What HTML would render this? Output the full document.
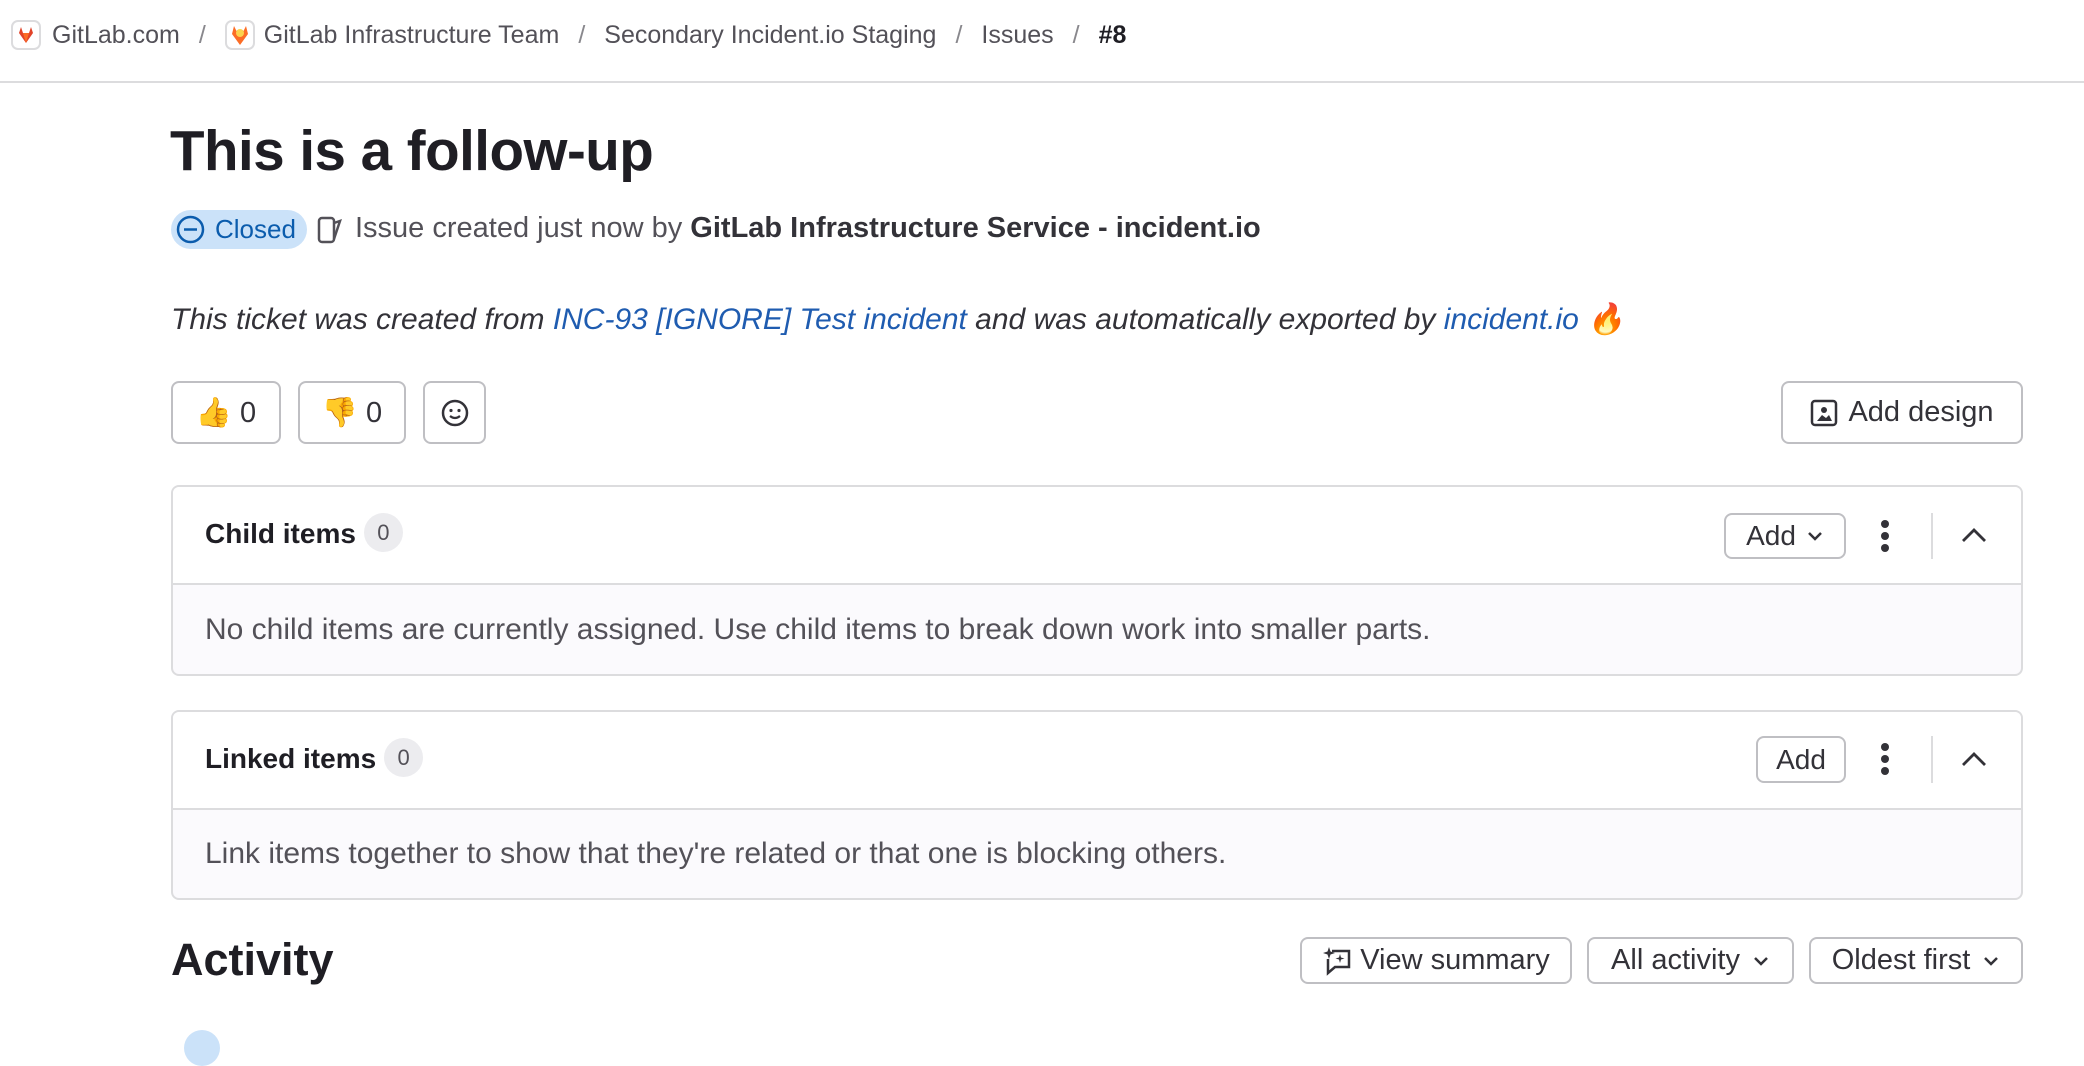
<!DOCTYPE html>
<html><head><meta charset="utf-8"><style>
*{box-sizing:border-box;margin:0;padding:0}
body{width:2084px;height:1036px;overflow:hidden;background:#fff;font-family:"Liberation Sans",sans-serif;color:#333238;position:relative}
.a{position:absolute;white-space:nowrap}
.bcrow{position:absolute;left:11px;top:20px;height:30px;display:flex;align-items:center;font-size:25px;color:#535158;white-space:nowrap}
.sl{color:#89888d;margin:0 19px}
.btn{position:absolute;border:2px solid #bfbfc3;border-radius:8px;background:#fff;display:flex;align-items:center;justify-content:center;font-size:29px;color:#333238;white-space:nowrap}
.card{position:absolute;left:171px;width:1852px;border:2px solid #dcdcde;border-radius:8px;background:#fbfafd;overflow:hidden}
.card .hd{height:98px;background:#fff;border-bottom:2px solid #dcdcde;position:relative}
.card .tt{position:absolute;left:32px;top:29px;font-size:28px;font-weight:bold;color:#1f1e24;white-space:nowrap}
.cnt{display:inline-block;width:39px;height:39px;border-radius:20px;background:#ececef;color:#535158;font-size:22px;font-weight:normal;text-align:center;line-height:39px;margin-left:8px;vertical-align:middle;position:relative;top:-3px}
.card .bd{position:absolute;left:32px;font-size:30px;color:#535158;white-space:nowrap}
</style></head><body>
<div class="bcrow">
<svg width="30" height="30" viewBox="0 0 30 30"><rect x="1" y="1" width="28" height="28" rx="6" fill="#fff" stroke="#dcdcde" stroke-width="2"/><path d="M15 23 L8 13 L10 7 L12 13 H18 L20 7 L22 13 Z" fill="#e24329"/><path d="M15 23 L12 13 H18 Z" fill="#fc6d26"/></svg>
<span style="margin-left:11px">GitLab.com</span><span class="sl">/</span>
<svg width="30" height="30" viewBox="0 0 30 30"><rect x="1" y="1" width="28" height="28" rx="6" fill="#fff" stroke="#dcdcde" stroke-width="2"/><path d="M15 25 L7 14 L9 6 L12 12 H18 L21 6 L23 14 Z" fill="#fc6d26"/><circle cx="15" cy="13" r="4" fill="#fcd34d"/></svg>
<span style="margin-left:9px">GitLab Infrastructure Team</span><span class="sl">/</span>
<span>Secondary Incident.io Staging</span><span class="sl">/</span>
<span>Issues</span><span class="sl">/</span>
<span style="font-weight:bold;color:#1f1e24">#8</span>
</div>
<div class="a" style="left:0;top:81px;width:2084px;height:2px;background:#dcdcde"></div>

<div class="a" style="left:170px;top:118px;font-size:56.5px;font-weight:bold;color:#1f1e24;letter-spacing:-0.5px">This is a follow-up</div>
<div class="a" style="left:171px;top:210px;width:136px;height:39px;border-radius:20px;background:#cbe2f9;"></div>
<svg class="a" style="left:175px;top:214px" width="31" height="31" viewBox="0 0 31 31"><circle cx="15.5" cy="15.5" r="12.5" fill="none" stroke="#0b5cad" stroke-width="2.5"/><path d="M9 15.5H22" stroke="#0b5cad" stroke-width="2.5"/></svg>
<div class="a" style="left:215px;top:214px;font-size:26px;color:#0b5cad">Closed</div>
<svg class="a" style="left:316px;top:215px" width="28" height="30" viewBox="0 0 28 30"><rect x="3" y="3" width="15" height="24" rx="3" fill="none" stroke="#535158" stroke-width="2.5"/><path d="M18 8 L24 6 L18 24" fill="none" stroke="#535158" stroke-width="2.5"/></svg>
<div class="a" style="left:355px;top:212px;font-size:29px;color:#535158">Issue created just now by <b style="color:#333238">GitLab Infrastructure Service - incident.io</b></div>

<div class="a" style="left:171px;top:302px;font-size:30px;font-style:italic;color:#333238">This ticket was created from <span style="color:#1f5cb0">INC-93 [IGNORE] Test incident</span> and was automatically exported by <span style="color:#1f5cb0">incident.io</span> 🔥</div>

<div class="btn" style="left:171px;top:381px;width:110px;height:63px">👍&nbsp;0</div>
<div class="btn" style="left:298px;top:381px;width:108px;height:63px">👎&nbsp;0</div>
<div class="btn" style="left:423px;top:381px;width:63px;height:63px"><svg width="30" height="30" viewBox="0 0 30 30"><circle cx="15" cy="15" r="12" fill="none" stroke="#333238" stroke-width="2.5"/><circle cx="11" cy="12.5" r="1.6" fill="#333238"/><circle cx="19" cy="12.5" r="1.6" fill="#333238"/><path d="M10 18 Q15 22 20 18" fill="none" stroke="#333238" stroke-width="2.2"/></svg></div>
<div class="btn" style="left:1781px;top:381px;width:242px;height:63px"><svg width="28" height="28" viewBox="0 0 28 28" style="margin-right:10px"><rect x="2" y="2" width="24" height="24" rx="3" fill="none" stroke="#333238" stroke-width="2.5"/><circle cx="14" cy="11" r="3" fill="#333238"/><path d="M7 22 L12 16 L16 19 L19 16 L22 22Z" fill="#333238"/></svg>Add design</div>

<div class="card" style="top:485px;height:191px">
 <div class="hd"><div class="tt">Child items<span class="cnt">0</span></div>
  <div class="btn" style="left:1551px;top:26px;width:122px;height:46px;font-size:28px">Add<svg width="18" height="12" viewBox="0 0 18 12" style="margin-left:10px"><path d="M3 3 L9 9 L15 3" fill="none" stroke="#333238" stroke-width="2.5"/></svg></div>
  <svg class="a" style="left:1707px;top:32px" width="10" height="34" viewBox="0 0 10 34"><circle cx="5" cy="5" r="4" fill="#333238"/><circle cx="5" cy="17" r="4" fill="#333238"/><circle cx="5" cy="29" r="4" fill="#333238"/></svg>
  <div class="a" style="left:1758px;top:26px;width:2px;height:46px;background:#dcdcde"></div>
  <svg class="a" style="left:1787px;top:38px" width="28" height="20" viewBox="0 0 28 20"><path d="M3 16 L14 5 L25 16" fill="none" stroke="#333238" stroke-width="2.8"/></svg>
 </div>
 <div class="bd" style="top:126px">No child items are currently assigned. Use child items to break down work into smaller parts.</div>
</div>

<div class="card" style="top:710px;height:190px">
 <div class="hd"><div class="tt">Linked items<span class="cnt">0</span></div>
  <div class="btn" style="left:1583px;top:24px;width:90px;height:47px;font-size:28px">Add</div>
  <svg class="a" style="left:1707px;top:30px" width="10" height="34" viewBox="0 0 10 34"><circle cx="5" cy="5" r="4" fill="#333238"/><circle cx="5" cy="17" r="4" fill="#333238"/><circle cx="5" cy="29" r="4" fill="#333238"/></svg>
  <div class="a" style="left:1758px;top:24px;width:2px;height:47px;background:#dcdcde"></div>
  <svg class="a" style="left:1787px;top:37px" width="28" height="20" viewBox="0 0 28 20"><path d="M3 16 L14 5 L25 16" fill="none" stroke="#333238" stroke-width="2.8"/></svg>
 </div>
 <div class="bd" style="top:125px">Link items together to show that they're related or that one is blocking others.</div>
</div>

<div class="a" style="left:171px;top:934px;font-size:45px;font-weight:bold;color:#1f1e24">Activity</div>
<div class="btn" style="left:1300px;top:937px;width:272px;height:47px"><svg width="32" height="32" viewBox="0 0 32 32" style="margin-right:6px"><path d="M10 6 H27 V22 H13 L6 28 V14" fill="none" stroke="#333238" stroke-width="2.5"/><path d="M7 2 L8.5 6.5 L13 8 L8.5 9.5 L7 14 L5.5 9.5 L1 8 L5.5 6.5Z" fill="#333238"/><path d="M18 9 L19 12.5 L22.5 13.5 L19 14.5 L18 18 L17 14.5 L13.5 13.5 L17 12.5Z" fill="#333238"/></svg>View summary</div>
<div class="btn" style="left:1587px;top:937px;width:207px;height:47px">All activity<svg width="18" height="12" viewBox="0 0 18 12" style="margin-left:12px"><path d="M3 3 L9 9 L15 3" fill="none" stroke="#333238" stroke-width="2.5"/></svg></div>
<div class="btn" style="left:1809px;top:937px;width:214px;height:47px">Oldest first<svg width="18" height="12" viewBox="0 0 18 12" style="margin-left:12px"><path d="M3 3 L9 9 L15 3" fill="none" stroke="#333238" stroke-width="2.5"/></svg></div>
<div class="a" style="left:184px;top:1030px;width:36px;height:36px;border-radius:18px;background:#cbe2f9"></div>
</body></html>
